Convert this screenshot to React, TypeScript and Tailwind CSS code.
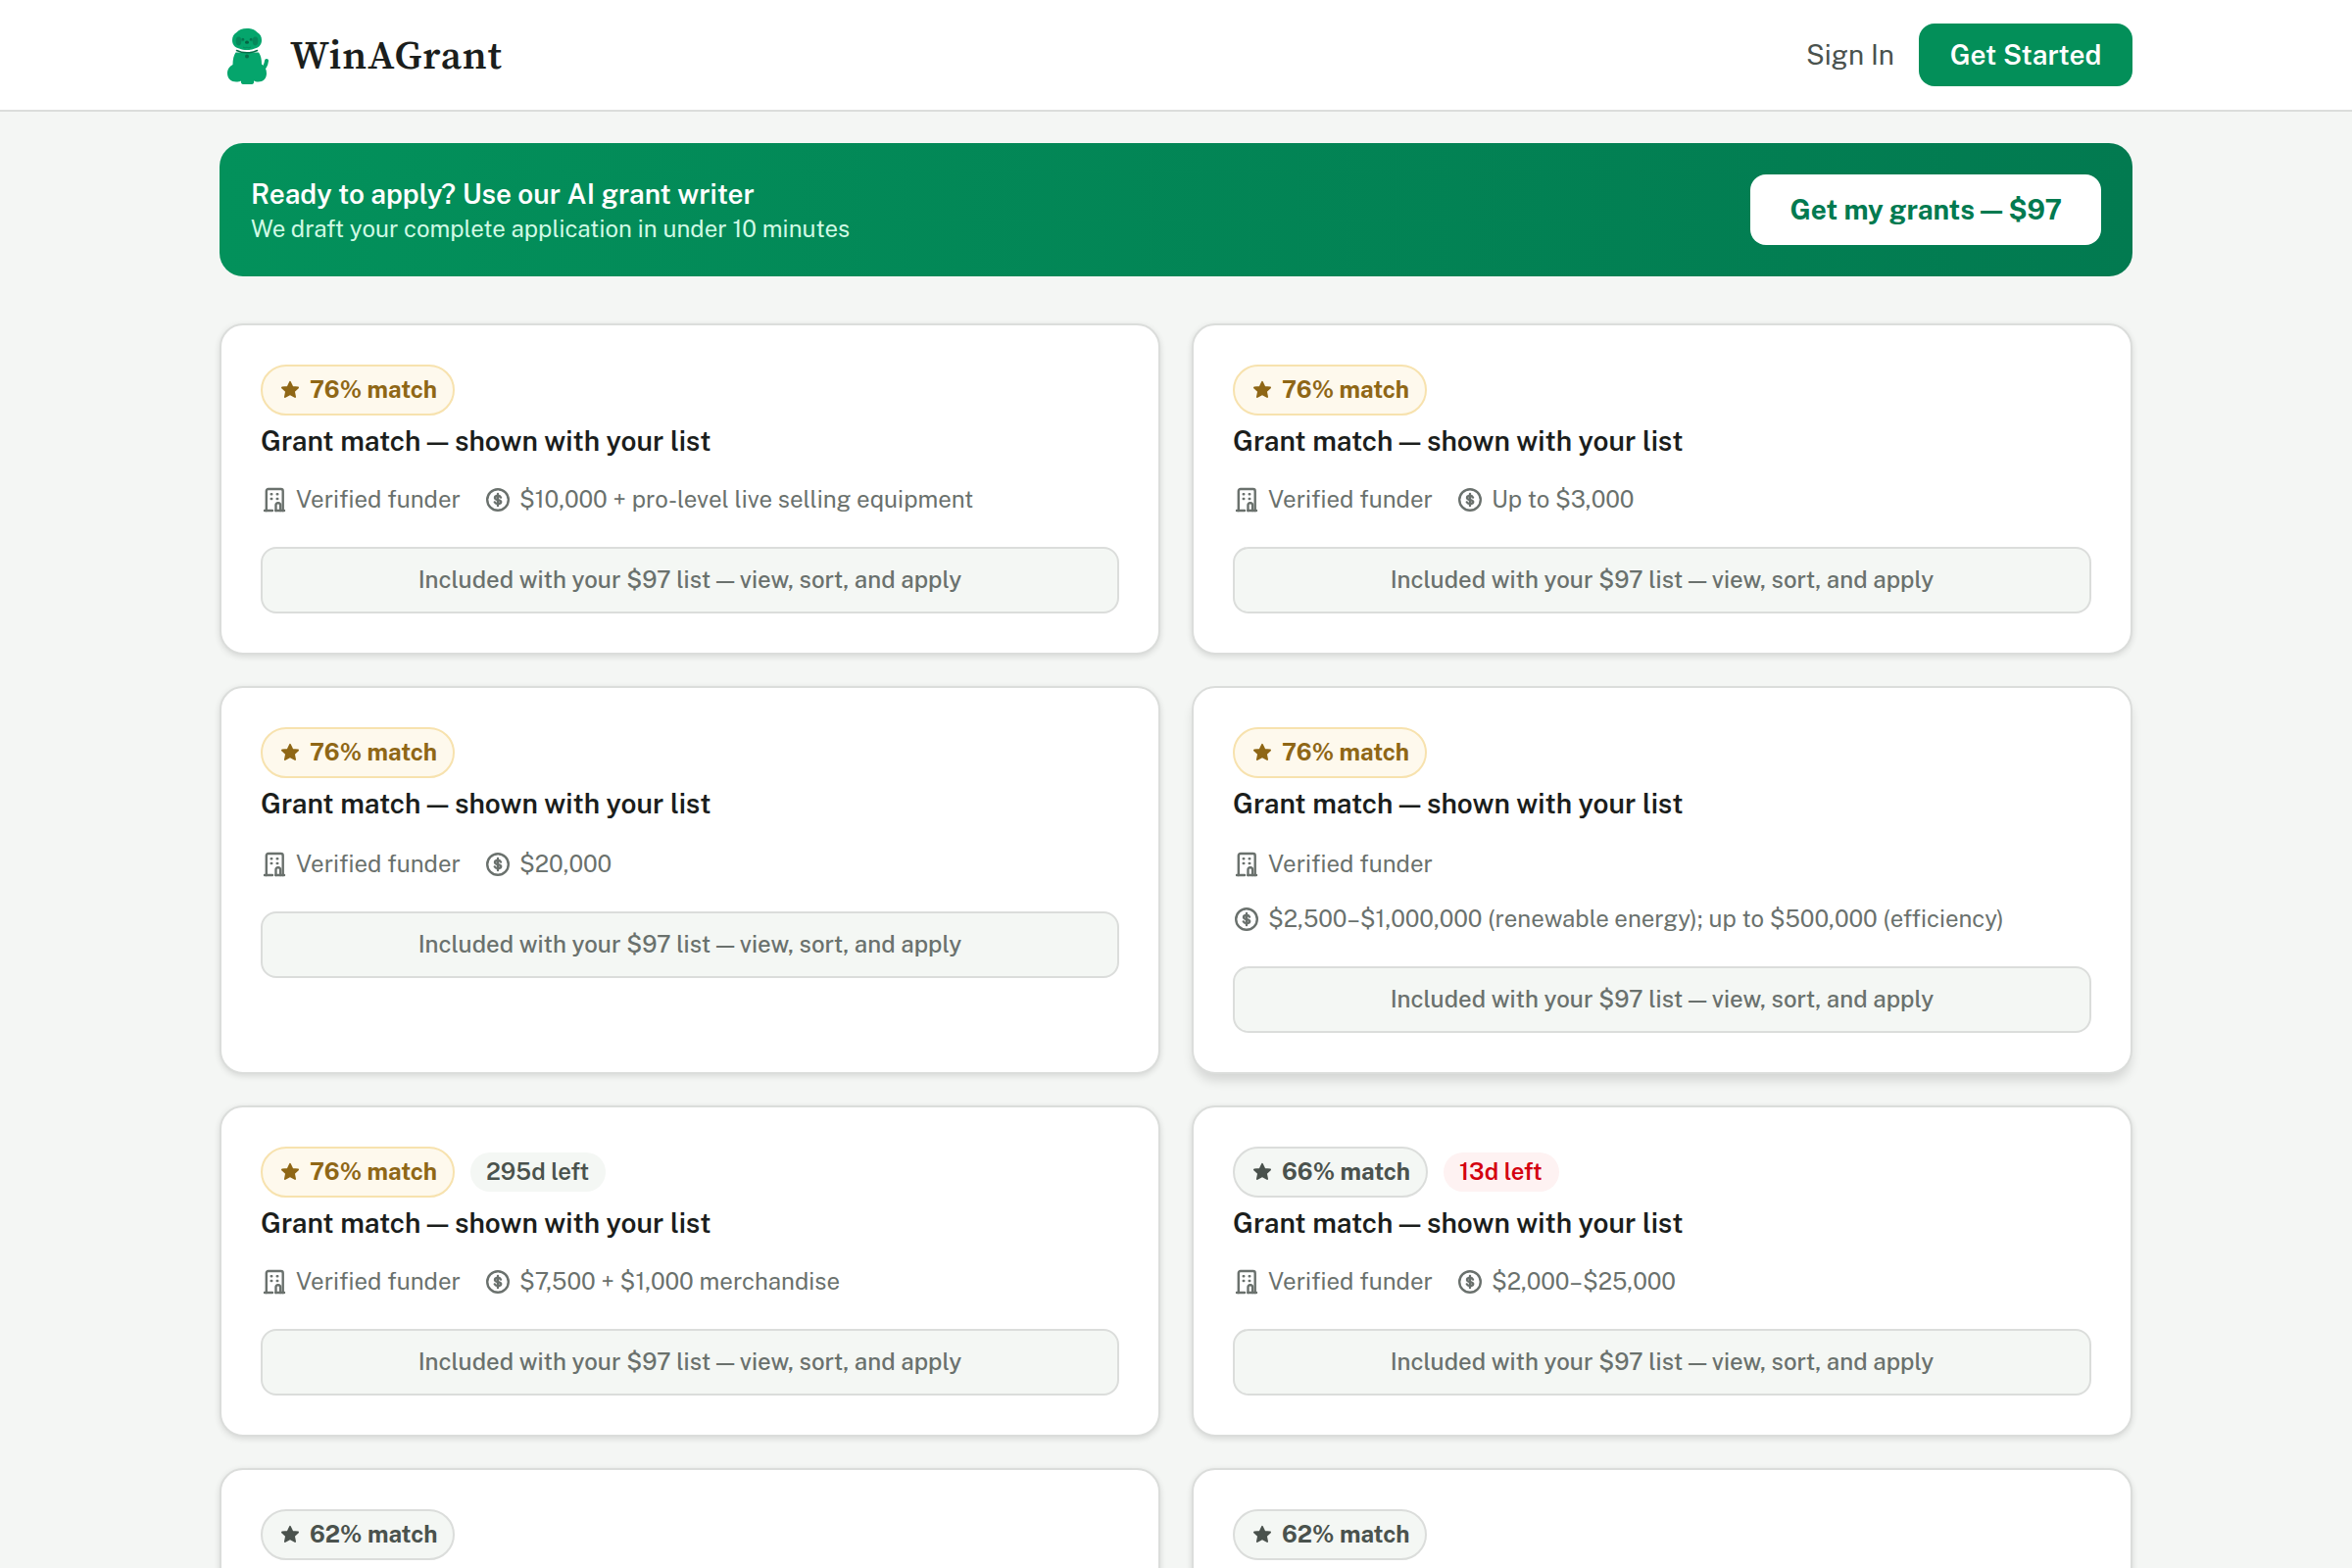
import React from 'react';
import clsx from 'clsx';

interface Grant {
  id: number;
  match: number;
  amount?: string;
  daysLeft?: number;
  hovered?: boolean;
  tall?: boolean;
}

const grants: Grant[] = [
  { id: 1, match: 76, amount: '$10,000 + pro-level live selling equipment' },
  { id: 2, match: 76, amount: 'Up to $3,000' },
  { id: 3, match: 76, amount: '$20,000', tall: true },
  { id: 4, match: 76, amount: '$2,500–$1,000,000 (renewable energy); up to $500,000 (efficiency)', tall: true, hovered: true },
  { id: 5, match: 76, amount: '$7,500 + $1,000 merchandise', daysLeft: 295 },
  { id: 6, match: 66, amount: '$2,000–$25,000', daysLeft: 13 },
  { id: 7, match: 62, amount: 'Up to $5,000' },
  { id: 8, match: 62, amount: 'Up to $10,000' },
];

function DogLogo() {
  return (
    <svg viewBox="0 0 42 57" className="w-[42px] h-[57px]" fill="none">
      {/* Tail */}
      <path d="M34.500 42c3.500-1.500 5-4.500 5.500-9" stroke="#05a56c" strokeWidth="4" strokeLinecap="round" />
      {/* Body */}
      <path
        d="M8.500 24.500h23.500c2.200 3 3 7 3 12 3.500 2 5 5.500 5 9.500 0 5-3.500 8.500-8.500 8.500-2 0-3.500-.5-4.500-1v1.500c0 1.500-1 2-3 2h-7c-2 0-3-.5-3-2V53.500c-1 .6-3 1-5 1-5 0-9-3.500-9-8.500 0-4 2.200-7.500 5.500-9 0-5.500 1-9.500 3-12.500z"
        fill="#05a56c"
      />
      {/* Head */}
      <path
        d="M20 0c5 0 8 1.500 10.500 4 3 1.500 4.500 4.500 4.500 8 0 5-3 7.500-7 8.500-2.500 1-5 1.500-8 1.500s-5.500-.5-8-1.500c-4-1-7-3.500-7-8.500 0-3.500 1.500-6.500 4.500-8C12 1.500 15 0 20 0z"
        fill="#05a56c"
      />
      {/* Ears and eye patches */}
      <ellipse cx="11.500" cy="13" rx="2.800" ry="4.400" fill="#07875a" />
      <ellipse cx="28.500" cy="13" rx="2.800" ry="4.400" fill="#07875a" />
      <circle cx="15.700" cy="11.500" r="1.700" fill="#07875a" />
      <circle cx="24.300" cy="11.500" r="1.700" fill="#07875a" />
      <circle cx="16" cy="11" r="0.800" fill="#056343" />
      <circle cx="24" cy="11" r="0.800" fill="#056343" />
      <ellipse cx="20" cy="14.200" rx="2" ry="1.600" fill="#056343" />
      <path d="M16 19c1.500 1.200 3 1 4 0 1 1 2.500 1.200 4 0" stroke="#07875a" strokeWidth="0.900" />
      {/* Collar */}
      <path d="M9.500 22.500c6 3 15 3 21 0" stroke="#067049" strokeWidth="1.600" strokeLinecap="round" />
      <circle cx="20" cy="28.500" r="2" fill="#067049" />
    </svg>
  );
}

function StarIcon() {
  return (
    <svg viewBox="0 0 24 24" className="w-6 h-6 shrink-0" fill="currentColor" stroke="currentColor" strokeWidth="1.800" strokeLinejoin="round">
      <path d="M12 3.800l2.400 5 5.700.7-4.100 3.900 1.100 5.600-5.100-2.800L6.900 19 8 13.400 3.900 9.500l5.700-.7z" />
    </svg>
  );
}

function BuildingIcon() {
  return (
    <svg viewBox="0 0 28 28" className="w-7 h-7 shrink-0" fill="none" stroke="currentColor" strokeWidth="2.400" strokeLinecap="round" strokeLinejoin="round">
      <path d="M5.800 25V5A2 2 0 0 1 7.800 3H20.700A2 2 0 0 1 22.700 5V25" />
      <path d="M4 25h8M15.300 25h8.700" />
      <path d="M15.500 25v-5.800a1.900 1.900 0 0 1 1.900-1.900h.8a1.900 1.900 0 0 1 1.900 1.900V25" />
      <path d="M10.700 8.300h.6M16.700 8.300h.6M10.700 13h.6M16.700 13h.6" />
    </svg>
  );
}

function DollarIcon() {
  return (
    <svg viewBox="0 0 28 28" className="w-7 h-7 shrink-0" fill="none" stroke="currentColor" strokeWidth="2.400" strokeLinecap="round" strokeLinejoin="round">
      <circle cx="14" cy="14" r="10.800" />
      <path d="M14 8v12" />
      <path d="M17 11.600c-.4-1-1.500-1.600-3-1.600-1.700 0-3 .8-3 2.100 0 2.900 6.200 1.100 6.200 4 0 1.200-1.300 2-3.200 2-1.600 0-2.800-.7-3.200-1.700" />
    </svg>
  );
}

function GrantCard({ grant }: { grant: Grant }) {
  const strong = grant.match >= 70;
  const urgent = grant.daysLeft !== undefined && grant.daysLeft < 30;

  return (
    <div
      className={clsx(
        'bg-white border-2 border-[#dbdddb] rounded-3xl p-10',
        grant.hovered ? 'shadow-[0_8px_12px_-2px_rgba(0,0,0,0.14)]' : 'shadow-[0_2px_6px_rgba(0,0,0,0.12)]'
      )}
    >
      <div className="flex items-center gap-4">
        <span
          className={clsx(
            'h-[52px] px-4 flex items-center gap-2 rounded-full border-2 text-2xl font-bold',
            strong ? 'bg-[#fef9ed] border-[#f7e2ae] text-[#8f6716]' : 'bg-[#f4f7f4] border-[#dbdddb] text-[#4a524d]'
          )}
        >
          <StarIcon />
          <span className="pb-0.5">{grant.match}% match</span>
        </span>
        {grant.daysLeft !== undefined && (
          <span
            className={clsx(
              'h-10 pl-4 pr-[17px] pb-0.5 flex items-center rounded-full text-2xl font-semibold',
              urgent ? 'bg-[#fef2f2] text-[#d4000f]' : 'bg-[#f4f7f4] text-[#4a524d]'
            )}
          >
            {grant.daysLeft}d left
          </span>
        )}
      </div>

      <h3 className="mt-1.5 text-[28px] leading-[39px] font-semibold text-[#1b1e1c]">Grant match — shown with your list</h3>

      <div className={clsx('flex flex-wrap gap-x-6 gap-y-4 text-2xl text-[#6a716d]', grant.tall ? 'mt-[23px]' : 'mt-[21px]')}>
        <span className="h-10 flex items-center gap-2">
          <BuildingIcon />
          <span className="pb-0.5">Verified funder</span>
        </span>
        <span className="h-10 flex items-center gap-2">
          <DollarIcon />
          <span className="pb-0.5">{grant.amount}</span>
        </span>
      </div>

      <div className="mt-7 h-[68px] pb-0.5 flex items-center justify-center bg-[#f4f7f4] border-2 border-[#dbdddb] rounded-2xl text-2xl font-medium text-[#6a716d]">
        Included with your $97 list — view, sort, and apply
      </div>
    </div>
  );
}

export default function App() {
  return (
    <div className="h-[1600px] overflow-hidden bg-[#f4f6f4] font-['Public_Sans','Libre_Franklin',Inter,sans-serif]">
      <header className="bg-white border-b-2 border-[#dbdddb]">
        <div className="max-w-[2048px] h-28 mx-auto px-12 flex items-center justify-between">
          <div className="pl-2 pt-0.5 flex items-center gap-[22px]">
            <DogLogo />
            <span className="font-['Source_Serif_4','Liberation_Serif',serif] text-[41px] tracking-[1px] font-semibold text-[#1b1e1c]">
              WinAGrant
            </span>
          </div>
          <div className="flex items-center gap-[25px]">
            <a className="text-[28px] text-[#4a524d]">Sign In</a>
            <button className="w-[218px] h-16 rounded-2xl bg-[#038f59] text-[28px] font-semibold text-white">Get Started</button>
          </div>
        </div>
      </header>

      <main className="max-w-[2048px] mx-auto px-12 pt-8">
        {/* Upsell banner */}
        <div className="h-[136px] px-8 flex items-center justify-between rounded-3xl bg-gradient-to-r from-[#03915b] to-[#027a50]">
          <div className="pt-0.5">
            <p className="text-[28px] leading-9 font-semibold text-white">Ready to apply? Use our AI grant writer</p>
            <p className="text-2xl leading-[35px] text-[#d0fae5]">We draft your complete application in under 10 minutes</p>
          </div>
          <button className="h-[72px] px-10 rounded-2xl bg-white text-[28px] font-bold text-[#027a50]">Get my grants — $97</button>
        </div>

        <div className="mt-12 grid grid-cols-2 gap-8">
          {grants.map((grant) => (
            <GrantCard key={grant.id} grant={grant} />
          ))}
        </div>
      </main>
    </div>
  );
}
